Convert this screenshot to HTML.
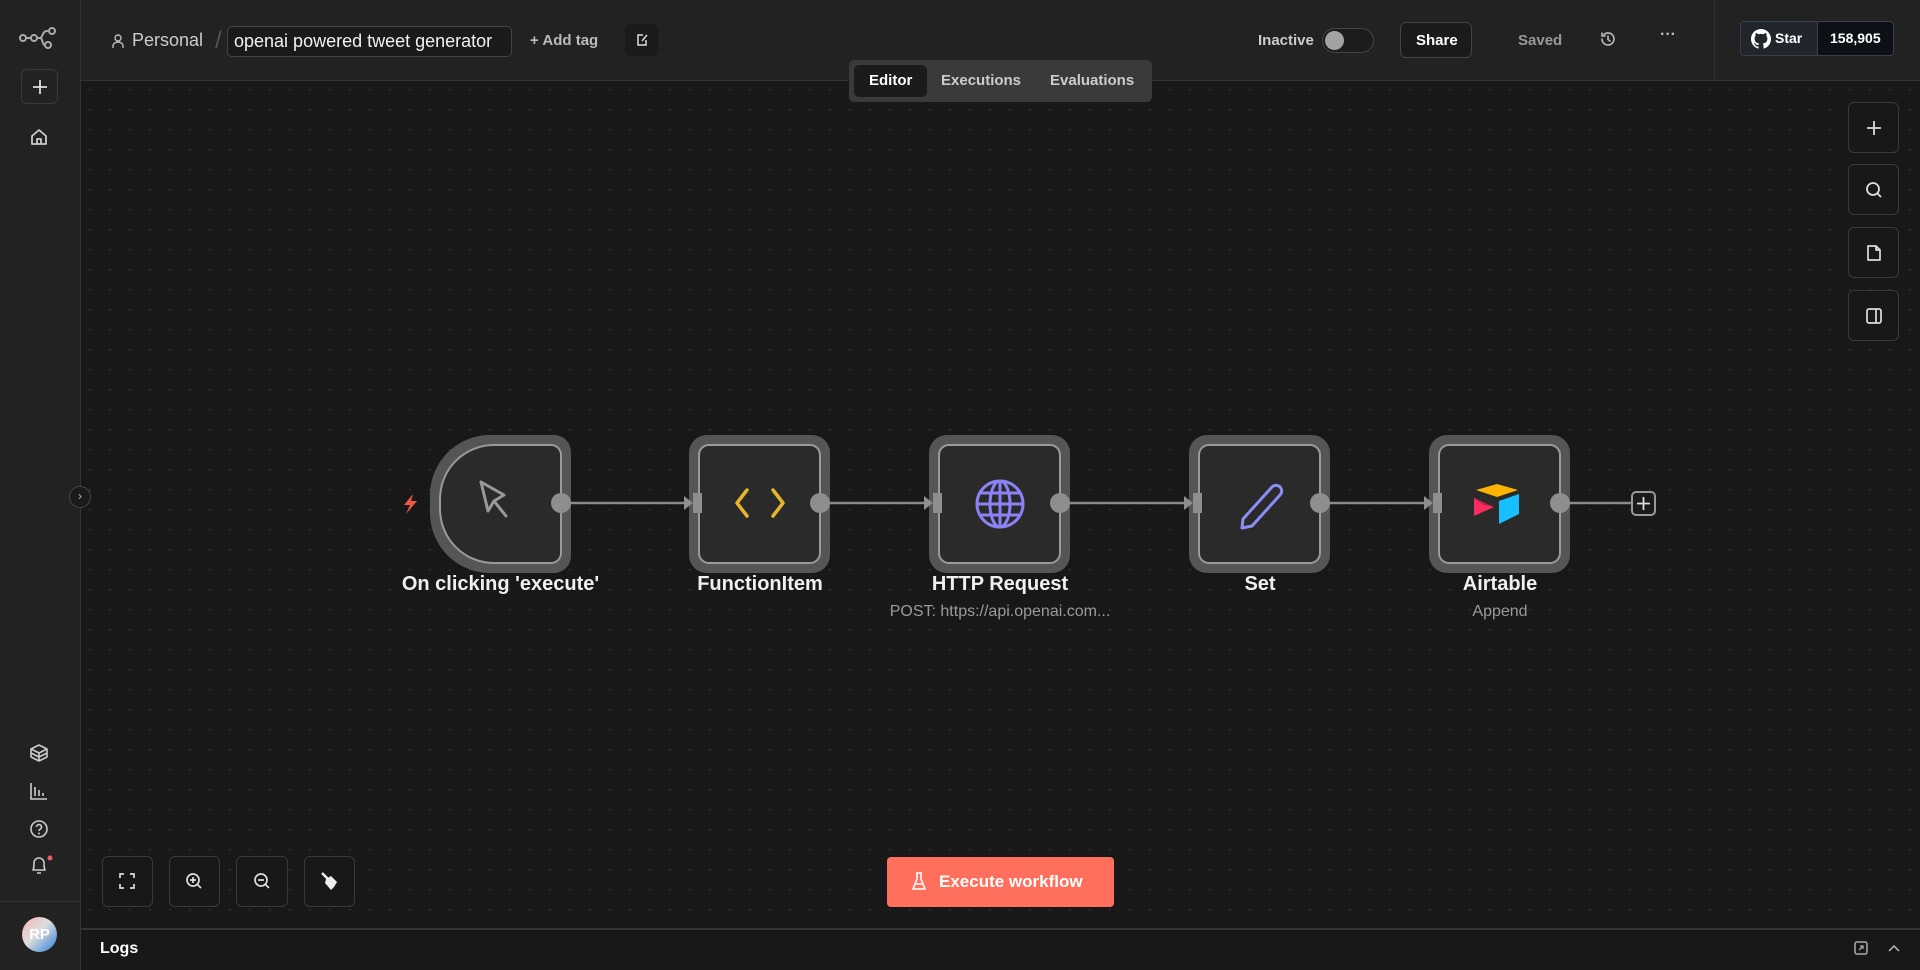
<!DOCTYPE html>
<html><head><meta charset="utf-8"><style>
*{box-sizing:border-box;margin:0;padding:0}
body{width:1920px;height:970px;overflow:hidden;background:#181818;font-family:"Liberation Sans",sans-serif;color:#ddd;position:relative}
.a{position:absolute}
.btn{position:absolute;border:1px solid #3a3a3a;border-radius:6px;background:#1b1b1b}
.t{position:absolute;white-space:nowrap}
</style></head><body>
<svg class="a" style="left:0;top:0" width="1920" height="970">
<defs>
<pattern id="dots" x="0" y="0" width="20" height="20" patternUnits="userSpaceOnUse"><rect x="9" y="9" width="1.4" height="1.4" fill="#3c3c3c"/></pattern>
</defs>
<rect x="81" y="81" width="1839" height="847" fill="url(#dots)"/>
<g stroke="#8a8a8a" stroke-width="2.5">
<line x1="571" y1="503" x2="690" y2="503"/>
<line x1="830" y1="503" x2="930" y2="503"/>
<line x1="1070" y1="503" x2="1190" y2="503"/>
<line x1="1330" y1="503" x2="1430" y2="503"/>
<line x1="1570" y1="503" x2="1632" y2="503"/>
</g>
<g>
<path d="M490 435 H554 a17 17 0 0 1 17 17 V556 a17 17 0 0 1 -17 17 H490 a60 60 0 0 1 -60 -60 V495 a60 60 0 0 1 60 -60z" fill="#555"/>
<path d="M494 445 H551 a10 10 0 0 1 10 10 V553 a10 10 0 0 1 -10 10 H494 a54 54 0 0 1 -54 -54 V499 a54 54 0 0 1 54 -54z" fill="#2a2a2a" stroke="#9a9a9a" stroke-width="2"/>
<rect x="689" y="435" width="141" height="138" rx="18" fill="#555"/>
<rect x="699" y="445" width="121" height="118" rx="10" fill="#2a2a2a" stroke="#9a9a9a" stroke-width="2"/>
<rect x="929" y="435" width="141" height="138" rx="18" fill="#555"/>
<rect x="939" y="445" width="121" height="118" rx="10" fill="#2a2a2a" stroke="#9a9a9a" stroke-width="2"/>
<rect x="1189" y="435" width="141" height="138" rx="18" fill="#555"/>
<rect x="1199" y="445" width="121" height="118" rx="10" fill="#2a2a2a" stroke="#9a9a9a" stroke-width="2"/>
<rect x="1429" y="435" width="141" height="138" rx="18" fill="#555"/>
<rect x="1439" y="445" width="121" height="118" rx="10" fill="#2a2a2a" stroke="#9a9a9a" stroke-width="2"/>
</g>
<g fill="#8e8e8e">
<circle cx="561" cy="503" r="10"/><circle cx="820" cy="503" r="10"/><circle cx="1060" cy="503" r="10"/><circle cx="1320" cy="503" r="10"/><circle cx="1560" cy="503" r="10"/>
<rect x="693" y="493" width="9" height="20"/><path d="M684 496 L693 503 L684 510z"/>
<rect x="933" y="493" width="9" height="20"/><path d="M924 496 L933 503 L924 510z"/>
<rect x="1193" y="493" width="9" height="20"/><path d="M1184 496 L1193 503 L1184 510z"/>
<rect x="1433" y="493" width="9" height="20"/><path d="M1424 496 L1433 503 L1424 510z"/>
</g>
<rect x="1632" y="492" width="23" height="23" rx="4" fill="#1b1b1b" stroke="#999" stroke-width="2"/>
<path d="M1643.5 497v13M1637 503.5h13" stroke="#ddd" stroke-width="1.8"/>
<path d="M413 494 L404 505 H410 L406 514 L417 501 H411z" fill="#ea5a47"/>
<!-- cursor icon -->
<path d="M481 484 L488 513 L494 503 L504 497z M494 503 L506 518" fill="none" stroke="#999" stroke-width="3" stroke-linejoin="round" stroke-linecap="round" transform="translate(0,-2)"/>
<path d="M747 490 L737 503 L747 516 M773 490 L783 503 L773 516" fill="none" stroke="#e7b52b" stroke-width="3.5" stroke-linecap="round" stroke-linejoin="round"/>
<g fill="none" stroke="#8a82f5" stroke-width="3"><circle cx="1000" cy="504" r="23"/><ellipse cx="1000" cy="504" rx="10" ry="23"/><line x1="977" y1="504" x2="1023" y2="504"/><line x1="981" y1="493" x2="1019" y2="493"/><line x1="981" y1="515" x2="1019" y2="515"/><line x1="1000" y1="481" x2="1000" y2="527"/></g>
<path d="M1272 487 a5.5 5.5 0 0 1 8 8 L1252 526 L1242 528 L1243 519z" fill="none" stroke="#8a8ff5" stroke-width="3" stroke-linejoin="round"/>
<path d="M1476 490 L1497 484 L1518 490 L1497 497z" fill="#fcb400"/>
<path d="M1499 501 L1519 494 V514 L1499 524z" fill="#18bfff"/>
<path d="M1474 498 L1494 507 L1474 516z" fill="#f82b60"/>
<path d="M1474 498 L1494 507 L1484 505z" fill="#ba1e45"/>
</svg>

<div class="t" style="left:390px;top:573px;width:221px;text-align:center;font-size:20px;color:#f0f0f0;font-weight:bold">On clicking 'execute'</div>
<div class="t" style="left:660px;top:573px;width:200px;text-align:center;font-size:20px;color:#f0f0f0;font-weight:bold">FunctionItem</div>
<div class="t" style="left:900px;top:573px;width:200px;text-align:center;font-size:20px;color:#f0f0f0;font-weight:bold">HTTP Request</div>
<div class="t" style="left:860px;top:603px;width:280px;text-align:center;font-size:16px;color:#9a9a9a">POST: https://api.openai.com...</div>
<div class="t" style="left:1160px;top:573px;width:200px;text-align:center;font-size:20px;color:#f0f0f0;font-weight:bold">Set</div>
<div class="t" style="left:1400px;top:573px;width:200px;text-align:center;font-size:20px;color:#f0f0f0;font-weight:bold">Airtable</div>
<div class="t" style="left:1400px;top:603px;width:200px;text-align:center;font-size:16px;color:#9a9a9a">Append</div>

<div class="a" style="left:81px;top:0;width:1839px;height:81px;background:#222;border-bottom:1px solid #333"></div>
<div class="a" style="left:1714px;top:0;width:1px;height:81px;background:#333"></div>
<div class="a" style="left:0;top:0;width:81px;height:970px;background:#222;border-right:1px solid #333"></div>
<div class="a" style="left:0;top:901px;width:81px;height:1px;background:#333"></div>
<svg class="a" style="left:18px;top:27px" width="42" height="24"><g fill="none" stroke="#aaa" stroke-width="2"><circle cx="5" cy="11" r="3"/><circle cx="16" cy="11" r="3"/><circle cx="34" cy="4" r="3"/><circle cx="30" cy="18" r="3"/><path d="M8 11h5M19 11h3c3 0 2-7 7-7h2M22 11c3 0 2 7 5 7"/></g></svg>
<div class="btn" style="left:21px;top:69px;width:37px;height:35px;background:#222"></div>
<svg class="a" style="left:30px;top:77px" width="20" height="20"><path d="M10 3v14M3 10h14" stroke="#ddd" stroke-width="1.8"/></svg>
<svg class="a" style="left:29px;top:127px" width="20" height="20"><path d="M3 9 L10 3 L17 9 V17 H3z M8 17 V12 H12 V17" fill="none" stroke="#ccc" stroke-width="1.8" stroke-linejoin="round"/></svg>
<svg class="a" style="left:29px;top:743px" width="20" height="20"><g fill="none" stroke="#ccc" stroke-width="1.6" stroke-linejoin="round"><path d="M10 2 L18 6 L10 10 L2 6z M2 6 V14 L10 18 L18 14 V6 M10 10 V18 M2 10 L10 14 L18 10"/></g></svg>
<svg class="a" style="left:29px;top:781px" width="20" height="20"><path d="M2 2 V18 H18 M6 6 V15 M10 9 V15 M14 12 V15" fill="none" stroke="#ccc" stroke-width="1.6"/></svg>
<svg class="a" style="left:29px;top:819px" width="20" height="20"><circle cx="10" cy="10" r="8" fill="none" stroke="#ccc" stroke-width="1.6"/><path d="M7.5 8a2.5 2.5 0 1 1 3.5 2.3c-.8.4-1 .9-1 1.7" fill="none" stroke="#ccc" stroke-width="1.6"/><circle cx="10" cy="14.5" r="1" fill="#ccc"/></svg>
<svg class="a" style="left:29px;top:855px" width="24" height="22"><path d="M4 15 C5 13 5 11 5 8 a5 5 0 0 1 10 0 c0 3 0 5 1 7z M8 18 h4" fill="none" stroke="#ccc" stroke-width="1.6" stroke-linejoin="round"/><circle cx="21" cy="3" r="2.5" fill="#ea5a67"/></svg>
<div class="a" style="left:22px;top:917px;width:35px;height:35px;border-radius:50%;background:linear-gradient(135deg,#f4b6b6 0%,#ddd 45%,#2a7ed8 100%);color:#fff;font-weight:bold;font-size:15px;text-align:center;line-height:35px">RP</div>
<div class="a" style="left:69px;top:486px;width:22px;height:22px;border-radius:50%;background:#1b1b1b;border:1px solid #444;color:#bbb;font-size:12px;text-align:center;line-height:19px">›</div>

<svg class="a" style="left:111px;top:33px" width="14" height="16"><circle cx="7" cy="5" r="3" fill="none" stroke="#bbb" stroke-width="1.4"/><path d="M2 15 V13 a5 4 0 0 1 10 0 V15" fill="none" stroke="#bbb" stroke-width="1.4"/></svg>
<div class="t" style="left:132px;top:30px;font-size:18px;color:#ccc">Personal</div>
<div class="t" style="left:215px;top:27px;font-size:24px;color:#555">/</div>
<div class="a" style="left:227px;top:26px;width:285px;height:31px;border:1px solid #444;border-radius:5px;background:#1a1a1a"></div>
<div class="t" style="left:234px;top:31px;font-size:18px;color:#f2f2f2">openai powered tweet generator</div>
<div class="t" style="left:530px;top:32px;font-size:15px;color:#bbb;font-weight:bold">+ Add tag</div>
<div class="a" style="left:625px;top:24px;width:33px;height:32px;border-radius:5px;background:#1a1a1a"></div>
<svg class="a" style="left:634px;top:32px" width="16" height="16"><path d="M9 3 H4 V13 H12 V8 M8 9 L13 3" fill="none" stroke="#ddd" stroke-width="1.5"/></svg>

<div class="a" style="left:849px;top:60px;width:303px;height:42px;background:#3a3a3a;border-radius:5px"></div>
<div class="a" style="left:854px;top:65px;width:73px;height:32px;background:#1b1b1b;border-radius:5px"></div>
<div class="t" style="left:869px;top:72px;font-size:15px;color:#fff;font-weight:bold">Editor</div>
<div class="t" style="left:941px;top:72px;font-size:15px;color:#ccc;font-weight:bold">Executions</div>
<div class="t" style="left:1050px;top:72px;font-size:15px;color:#ccc;font-weight:bold">Evaluations</div>

<div class="t" style="left:1258px;top:32px;font-size:15px;color:#ccc;font-weight:bold">Inactive</div>
<div class="a" style="left:1322px;top:28px;width:52px;height:25px;border-radius:13px;border:1px solid #444;background:#1c1c1c"></div>
<div class="a" style="left:1325px;top:31px;width:19px;height:19px;border-radius:50%;background:#a3a3a3"></div>
<div class="btn" style="left:1400px;top:22px;width:72px;height:36px;border-color:#444"></div>
<div class="t" style="left:1416px;top:32px;font-size:15px;color:#fff;font-weight:bold">Share</div>
<div class="t" style="left:1518px;top:32px;font-size:15px;color:#999;font-weight:bold">Saved</div>
<svg class="a" style="left:1599px;top:30px" width="18" height="18"><path d="M3 9 a6 6 0 1 0 2-4.5 M3 3 V6 H6 M9 6 V9.5 L11 11" fill="none" stroke="#bbb" stroke-width="1.6" stroke-linecap="round"/></svg>
<div class="t" style="left:1660px;top:26px;font-size:16px;color:#bbb;font-weight:bold">···</div>

<div class="a" style="left:1740px;top:21px;width:154px;height:35px;border:1px solid #3b3f46;border-radius:4px;background:#0d1117;overflow:hidden"><div class="a" style="left:0;top:0;width:77px;height:35px;background:#21262d;border-right:1px solid #3b3f46"></div></div>
<svg class="a" style="left:1751px;top:29px" width="20" height="20" viewBox="0 0 16 16"><path fill="#fff" d="M8 0C3.58 0 0 3.580 0 8c0 3.54 2.290 6.530 5.470 7.590.4.07.55-.17.55-.38v-1.340c-2.230.48-2.700-1.070-2.700-1.070-.36-.92-.89-1.170-.89-1.170-.73-.5.05-.49.05-.49.8.06 1.230.83 1.230.83.72 1.220 1.870.87 2.330.66.07-.52.28-.87.51-1.070-1.780-.2-3.650-.89-3.650-3.950 0-.87.31-1.590.82-2.150-.08-.2-.36-1.020.08-2.120 0 0 .67-.21 2.200.82a7.600 7.600 0 0 1 4 0c1.530-1.040 2.200-.82 2.200-.82.44 1.100.16 1.920.08 2.120.51.56.82 1.270.82 2.150 0 3.070-1.870 3.750-3.650 3.950.29.25.54.73.54 1.480v2.200c0 .21.15.46.55.38A8 8 0 0 0 16 8c0-4.420-3.580-8-8-8z"/></svg>
<div class="t" style="left:1775px;top:30px;font-size:14px;color:#fff;font-weight:bold">Star</div>
<div class="t" style="left:1830px;top:30px;font-size:14px;color:#fff;font-weight:bold">158,905</div>

<div class="btn" style="left:1848px;top:102px;width:51px;height:51px;background:#181818"></div>
<svg class="a" style="left:1864px;top:118px" width="20" height="20"><path d="M10 3v14M3 10h14" stroke="#ddd" stroke-width="1.8"/></svg>
<div class="btn" style="left:1848px;top:164px;width:51px;height:51px;background:#181818"></div>
<svg class="a" style="left:1864px;top:180px" width="20" height="20"><circle cx="9" cy="9" r="6" fill="none" stroke="#ddd" stroke-width="1.8"/><path d="M13.5 13.5 L17 17" stroke="#ddd" stroke-width="1.8"/></svg>
<div class="btn" style="left:1848px;top:227px;width:51px;height:51px;background:#181818"></div>
<svg class="a" style="left:1864px;top:243px" width="20" height="20"><path d="M4 3 H12 L16 7 V17 H4z M12 3 V7 H16" fill="none" stroke="#ddd" stroke-width="1.7" stroke-linejoin="round"/></svg>
<div class="btn" style="left:1848px;top:290px;width:51px;height:51px;background:#181818"></div>
<svg class="a" style="left:1864px;top:306px" width="20" height="20"><rect x="3" y="3" width="14" height="14" rx="2" fill="none" stroke="#ddd" stroke-width="1.7"/><path d="M12 3 V17" stroke="#ddd" stroke-width="1.7"/></svg>

<div class="btn" style="left:102px;top:856px;width:51px;height:51px;background:#181818"></div>
<svg class="a" style="left:117px;top:871px" width="20" height="20"><path d="M3 7V3H7M13 3H17V7M17 13V17H13M7 17H3V13" fill="none" stroke="#ddd" stroke-width="1.7"/></svg>
<div class="btn" style="left:169px;top:856px;width:51px;height:51px;background:#181818"></div>
<svg class="a" style="left:184px;top:871px" width="20" height="20"><circle cx="9" cy="9" r="6" fill="none" stroke="#ddd" stroke-width="1.7"/><path d="M13.5 13.5L17 17M9 6V12M6 9H12" stroke="#ddd" stroke-width="1.7"/></svg>
<div class="btn" style="left:236px;top:856px;width:52px;height:51px;background:#181818"></div>
<svg class="a" style="left:252px;top:871px" width="20" height="20"><circle cx="9" cy="9" r="6" fill="none" stroke="#ddd" stroke-width="1.7"/><path d="M13.5 13.5L17 17M6 9H12" stroke="#ddd" stroke-width="1.7"/></svg>
<div class="btn" style="left:304px;top:856px;width:51px;height:51px;background:#181818"></div>
<svg class="a" style="left:319px;top:871px" width="22" height="22"><path d="M3 2 L9 8" stroke="#eee" stroke-width="2.5"/><path d="M7 8 L12 5 L18 11 L15 16 L12 19 L6 12z" fill="#eee"/></svg>

<div class="a" style="left:887px;top:857px;width:227px;height:50px;background:#ff6f5c;border-radius:4px"></div>
<svg class="a" style="left:912px;top:872px" width="14" height="20"><path d="M4 1 H10 M5 1 V7 L1 17 H13 L9 7 V1 M3 12 H11" fill="none" stroke="#fff" stroke-width="1.6" stroke-linejoin="round"/></svg>
<div class="t" style="left:939px;top:872px;font-size:17px;color:#fff;font-weight:bold">Execute workflow</div>

<div class="a" style="left:81px;top:928px;width:1839px;height:42px;background:#181818;border-top:2px solid #333"></div>
<div class="t" style="left:100px;top:940px;font-size:16px;color:#fff;font-weight:bold">Logs</div>
<svg class="a" style="left:1853px;top:940px" width="16" height="16"><rect x="2" y="2" width="12" height="12" rx="2" fill="none" stroke="#aaa" stroke-width="1.5"/><path d="M6 10 L10 6 M7 6H10V9" stroke="#aaa" stroke-width="1.3" fill="none"/></svg>
<svg class="a" style="left:1887px;top:943px" width="14" height="10"><path d="M2 8 L7 3 L12 8" fill="none" stroke="#bbb" stroke-width="1.5"/></svg>
</body></html>
